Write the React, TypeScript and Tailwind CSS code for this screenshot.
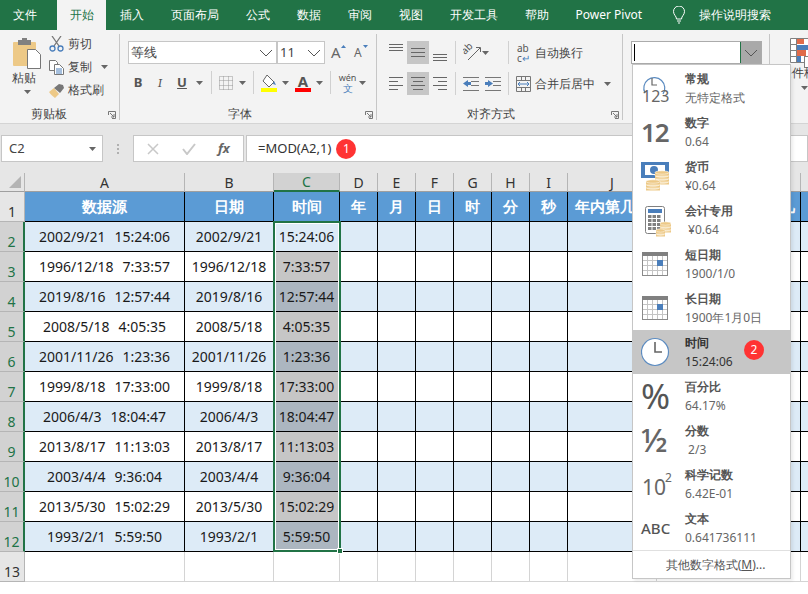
import React from 'react';

const rows = [
  ['2002/9/21', '15:24:06'],
  ['1996/12/18', '7:33:57'],
  ['2019/8/16', '12:57:44'],
  ['2008/5/18', '4:05:35'],
  ['2001/11/26', '1:23:36'],
  ['1999/8/18', '17:33:00'],
  ['2006/4/3', '18:04:47'],
  ['2013/8/17', '11:13:03'],
  ['2003/4/4', '9:36:04'],
  ['2013/5/30', '15:02:29'],
  ['1993/2/1', '5:59:50'],
];

const tabs = ['插入', '页面布局', '公式', '数据', '审阅', '视图', '开发工具', '帮助', 'Power Pivot'];
const letters = ['D', 'E', 'F', 'G', 'H', 'I', 'J', 'K', 'L'];

const Caret = ({ className = '' }: { className?: string }) => (
  <svg width="7" height="4" viewBox="0 0 7 4" className={className}>
    <path d="M0 0h7L3.5 4z" fill="#666" />
  </svg>
);

const Chevron = () => (
  <svg width="14" height="8" viewBox="0 0 14 8">
    <path d="M1 1l6 6 6-6" fill="none" stroke="#555" strokeWidth="1" />
  </svg>
);

const Launcher = () => (
  <svg width="8" height="8" viewBox="0 0 8 8" className="absolute right-[3px] bottom-[1px]">
    <path d="M.5 4V.5H7.5V7.5H4M2 2l4 4M6 3v3H3" fill="none" stroke="#777" strokeWidth="1" />
  </svg>
);

const Sep = ({ className = '' }: { className?: string }) => <div className={'w-px h-[23px] bg-[#d0d0d0] ' + className} />;

// x1, x2, y for each stroke of an alignment glyph
const Lines = ({ d, w = 14, h = 23, color = '#666' }: { d: number[][]; w?: number; h?: number; color?: string }) => (
  <svg width={w} height={h} viewBox={'0 0 ' + w + ' ' + h}>
    {d.map((l, i) => (
      <line key={i} x1={l[0]} x2={l[1]} y1={l[2] + 0.5} y2={l[2] + 0.5} stroke={color} strokeWidth="1" />
    ))}
  </svg>
);

const AlignBtn = ({ d, on }: { d: number[][]; on?: boolean }) => (
  <div className={'w-[22px] h-[23px] flex items-center justify-center ' + (on ? 'bg-[#c6c6c6]' : '')}>
    <Lines d={d} />
  </div>
);

const Coins = ({ x, y, w = 14, n = 3 }: { x: number; y: number; w?: number; n?: number }) => (
  <g>
    {Array.from({ length: n }).map((_, i) => (
      <g key={i}>
        <rect x={x} y={y + (n - 1 - i) * 3 + 1.5} width={w} height="3" fill="#edc987" />
        <ellipse cx={x + w / 2} cy={y + (n - 1 - i) * 3 + 1.5} rx={w / 2} ry="1.7" fill={i === n - 1 ? '#edc987' : '#f6e3bd'} stroke="#fff" strokeWidth=".5" />
      </g>
    ))}
  </g>
);

const CalendarIcon = () => (
  <svg width="30" height="44" viewBox="0 0 30 44">
    <rect x="1.5" y="10.5" width="25" height="23" fill="#fff" stroke="#8a8a8a" />
    <rect x="1" y="10" width="26" height="4" fill="#808080" />
    {[6.5, 11.5, 16.5, 21.5].map((x) => (
      <line key={x} x1={x} x2={x} y1="14" y2="33" stroke="#c4c4c4" />
    ))}
    {[18.5, 23.5, 28.5].map((y) => (
      <line key={y} x1="2" x2="26" y1={y} y2={y} stroke="#c4c4c4" />
    ))}
    <rect x="16" y="18" width="6" height="6" fill="#4a7ebb" />
  </svg>
);

const menu: { title: string; sub: string; icon: React.ReactNode; on?: boolean }[] = [
  {
    title: '常规',
    sub: '无特定格式',
    icon: (
      <div className="relative w-[30px] h-[44px]">
        <svg width="30" height="44" viewBox="0 0 30 44">
          <path d="M4 27a10.5 10.5 0 1 1 18 1" fill="none" stroke="#5b8bc0" strokeWidth="1.2" />
          <path d="M11 12v7h5" fill="none" stroke="#666" strokeWidth="1.2" />
        </svg>
        <span className="absolute left-[1px] top-[20px] text-[16px] leading-[20px] text-[#666]">123</span>
      </div>
    ),
  },
  {
    title: '数字',
    sub: '0.64',
    icon: <span className="block w-[30px] text-[26px] leading-[44px] tracking-[-1px] font-semibold text-[#666] font-['Noto_Sans',sans-serif]">12</span>,
  },
  {
    title: '货币',
    sub: '¥0.64',
    icon: (
      <svg width="30" height="44" viewBox="0 0 30 44">
        <rect x="0" y="8" width="28" height="16" fill="#4a7ebb" />
        <path d="M4 11h20v10H4z" fill="#fff" />
        <circle cx="13" cy="16" r="4" fill="#4a7ebb" />
        <Coins x={14} y={17} n={4} />
        <Coins x={5} y={26} n={3} />
      </svg>
    ),
  },
  {
    title: '会计专用',
    sub: ' ¥0.64',
    icon: (
      <svg width="30" height="44" viewBox="0 0 30 44">
        <rect x="4.5" y="8.5" width="19" height="27" rx="2" fill="#fff" stroke="#808080" />
        <rect x="7" y="11" width="14" height="4" fill="#4a7ebb" />
        {[17, 21, 25, 29].map((y) =>
          [7, 11.5, 16].map((x) => <rect key={x + '-' + y} x={x} y={y} width="3.5" height="3" fill="#808080" />),
        )}
        <Coins x={19} y={24} w={11} n={3} />
        <Coins x={15} y={31} w={9} n={2} />
      </svg>
    ),
  },
  { title: '短日期', sub: '1900/1/0', icon: <CalendarIcon /> },
  { title: '长日期', sub: '1900年1月0日', icon: <CalendarIcon /> },
  {
    title: '时间',
    sub: '15:24:06',
    on: true,
    icon: (
      <svg width="30" height="44" viewBox="0 0 30 44">
        <circle cx="14" cy="22" r="13.5" fill="#fff" stroke="#5b8bc0" strokeWidth="1.2" />
        <path d="M14 12v10h7" fill="none" stroke="#666" strokeWidth="1.6" />
      </svg>
    ),
  },
  {
    title: '百分比',
    sub: '64.17%',
    icon: <span className="block w-[30px] text-[35px] leading-[44px] text-[#555] font-['Liberation_Sans',sans-serif]">%</span>,
  },
  {
    title: '分数',
    sub: ' 2/3',
    icon: <span className="block w-[30px] text-[33px] leading-[44px] font-medium text-[#666] font-['Noto_Sans',sans-serif]">½</span>,
  },
  {
    title: '科学记数',
    sub: '6.42E-01',
    icon: (
      <div className="relative w-[30px] h-[44px] text-[#666] font-['Liberation_Sans',sans-serif]">
        <span className="absolute left-[1px] top-[13px] text-[21px] leading-[24px]">10</span>
        <span className="absolute left-[24px] top-[9px] text-[12px] leading-[14px]">2</span>
      </div>
    ),
  },
  {
    title: '文本',
    sub: '0.641736111',
    icon: <span className="block w-[30px] text-[15px] leading-[44px] font-medium whitespace-nowrap text-[#555] font-['Noto_Sans',sans-serif]">ABC</span>,
  },
];

const Badge = ({ n, className = '' }: { n: number; className?: string }) => (
  <span className={'inline-flex items-center justify-center w-[20px] h-[20px] rounded-full bg-[#ff3333] text-white text-[12px] leading-none ' + className}>{n}</span>
);

const Ribbon = () => (
  <div className="flex h-[94px] bg-[#f3f3f3] border-b border-[#d4d4d4] text-[12px] text-[#444] overflow-hidden">
    {/* clipboard */}
    <div className="relative w-[120px] mt-[4px] h-[86px] flex flex-col border-r border-[#c6c6c6] shrink-0">
      <div className="flex flex-1">
        <div className="w-[49px] pl-[12px] pt-[4px] flex flex-col">
          <svg width="30" height="32" viewBox="0 0 30 32">
            <rect x="1" y="4" width="23" height="24" rx="1" fill="#edc987" />
            <rect x="6" y="2" width="13" height="5" fill="#808080" />
            <rect x="10" y="0" width="5" height="3" fill="#808080" />
            <path d="M15.5 11.5h8l5 5v14h-13z" fill="#fff" stroke="#777" />
          </svg>
          <span className="leading-[16px]">粘贴</span>
          <Caret className="ml-[12px] mt-[4px]" />
        </div>
        <div className="flex flex-col pt-[3px] gap-[9px]">
          <div className="flex items-center h-[14px]">
            <svg width="15" height="16" viewBox="0 0 15 16" className="mr-[4px]">
              <path d="M3 0l7 10M12 0L5 10" stroke="#777" strokeWidth="1.3" />
              <circle cx="3.500" cy="12.500" r="2.500" fill="none" stroke="#4a7ebb" strokeWidth="1.3" />
              <circle cx="11.500" cy="12.500" r="2.500" fill="none" stroke="#4a7ebb" strokeWidth="1.3" />
            </svg>
            剪切
          </div>
          <div className="flex items-center h-[14px]">
            <svg width="15" height="15" viewBox="0 0 15 15" className="mr-[4px]">
              <path d="M.5.5h6l2 2v8H.5z" fill="#fff" stroke="#777" />
              <path d="M5.500 4.500h5l4 4v6h-9z" fill="#fff" stroke="#777" />
              <path d="M7 9h6M7 11h6M7 13h6" stroke="#4a7ebb" />
            </svg>
            复制
            <Caret className="ml-[9px]" />
          </div>
          <div className="flex items-center h-[14px]">
            <svg width="15" height="15" viewBox="0 0 15 15" className="mr-[4px]">
              <path d="M0 9l5-4 5 6-4 4c-2-2-4-3-6-6z" fill="#edc987" />
              <path d="M5 5l5-4 4 1 1 3-4 5z" fill="#777" />
            </svg>
            格式刷
          </div>
        </div>
      </div>
      <div className="h-[12px] pr-[22px] text-center leading-[12px]">剪贴板</div>
      <Launcher />
    </div>

    {/* font */}
    <div className="relative w-[257px] mt-[4px] h-[86px] flex flex-col border-r border-[#c6c6c6] shrink-0 pl-[8px]">
      <div className="flex items-center mt-[7px] h-[23px]">
        <div className="w-[149px] h-[23px] bg-white border border-[#c6c6c6] flex items-center justify-between pl-[2px] pr-[3px] text-[13px]">
          等线
          <Chevron />
        </div>
        <div className="w-[48px] h-[23px] bg-white border border-[#c6c6c6] flex items-center justify-between pl-[2px] pr-[3px] text-[13px]">
          11
          <Chevron />
        </div>
        <div className="relative ml-[6px] w-[20px] text-[15px] leading-none text-[#666] font-['Liberation_Sans',sans-serif]">
          A
          <svg width="5" height="3" viewBox="0 0 5 3" className="absolute left-[10px] top-[0px]"><path d="M0 3h5L2.500 0z" fill="#4a7ebb" /></svg>
        </div>
        <div className="relative ml-[3px] w-[18px] text-[12px] leading-none text-[#666] font-['Liberation_Sans',sans-serif]">
          A
          <svg width="5" height="3" viewBox="0 0 5 3" className="absolute left-[9px] -top-[2px]"><path d="M0 0h5L2.500 3z" fill="#4a7ebb" /></svg>
        </div>
      </div>
      <div className="flex items-center h-[23px] mt-[7px] text-[#555] font-['Liberation_Sans',sans-serif] text-[13px]">
        <span className="w-[20px] text-center font-bold">B</span>
        <span className="w-[24px] text-center italic font-serif">I</span>
        <span className="w-[20px] text-center underline font-bold">U</span>
        <Caret className="ml-[4px]" />
        <Sep className="ml-[8px]" />
        <svg width="14" height="14" viewBox="0 0 14 14" className="ml-[7px]">
          <path d="M.5.5h13v13H.5zM4.500.5v13M9.500.5v13M.5 4.500h13M.5 9.500h13" fill="none" stroke="#999" strokeDasharray="1 1" />
        </svg>
        <Caret className="ml-[6px]" />
        <Sep className="ml-[7px]" />
        <svg width="16" height="18" viewBox="0 0 16 18" className="ml-[7px]">
          <path d="M6 1l7 7-5 5-6-6z" fill="#fff" stroke="#666" />
          <path d="M13 7l2 4-3-1z" fill="#4a7ebb" />
          <rect x="0" y="14" width="16" height="4" fill="#ffff00" />
        </svg>
        <Caret className="ml-[5px]" />
        <div className="ml-[6px] w-[16px] h-[18px] flex flex-col items-center">
          <span className="text-[15px] leading-[14px] font-bold">A</span>
          <span className="w-[16px] h-[4px] bg-[#ff0000]" />
        </div>
        <Caret className="ml-[5px]" />
        <Sep className="ml-[7px]" />
        <div className="ml-[8px] w-[17px] flex flex-col items-center">
          <span className="text-[9px] leading-[10px] whitespace-nowrap font-['Noto_Sans',sans-serif]">wén</span>
          <span className="text-[10px] leading-[10px] text-[#4a7ebb] font-['Noto_Sans_CJK_SC',sans-serif]">文</span>
        </div>
        <Caret className="ml-[3px]" />
      </div>
      <div className="mt-auto h-[12px] -ml-[8px] pr-[16px] text-center leading-[12px]">字体</div>
      <Launcher />
    </div>

    {/* alignment */}
    <div className="relative w-[246px] mt-[4px] h-[86px] flex flex-col border-r border-[#c6c6c6] shrink-0 pl-[8px]">
      <div className="flex items-center mt-[7px] h-[23px]">
        <AlignBtn d={[[0, 14, 3], [0, 14, 6], [0, 14, 9]]} />
        <AlignBtn on d={[[0, 14, 7], [0, 14, 11], [0, 14, 15]]} />
        <AlignBtn d={[[0, 14, 13], [0, 14, 16], [0, 14, 19]]} />
        <Sep className="ml-[4px]" />
        <svg width="18" height="17" viewBox="0 0 18 17" className="ml-[7px]">
          <text x="2" y="11" fontSize="10" fill="#555" transform="rotate(-45 2 11)">ab</text>
          <path d="M5 16L17 4M13 3.500h4.500V8" fill="none" stroke="#666" />
        </svg>
        <Caret className="ml-[1px]" />
        <Sep className="ml-[19px]" />
        <div className="ml-[8px] w-[18px] flex flex-col text-[10px] leading-[10px] text-[#555]">
          <span>ab</span>
          <span>c<span className="text-[#4a7ebb]">↵</span></span>
        </div>
        <span>自动换行</span>
      </div>
      <div className="flex items-center mt-[8px] h-[23px]">
        <AlignBtn d={[[0, 14, 5], [0, 9, 9], [0, 14, 13], [0, 9, 17]]} />
        <AlignBtn on d={[[0, 14, 5], [2, 12, 9], [0, 14, 13], [2, 12, 17]]} />
        <AlignBtn d={[[0, 14, 5], [5, 14, 9], [0, 14, 13], [5, 14, 17]]} />
        <Sep className="ml-[4px]" />
        <svg width="16" height="14" viewBox="0 0 16 14" className="ml-[7px]">
          <path d="M0 .5h16M8 4.500h8M8 8.500h8M0 13.500h16" stroke="#777" />
          <path d="M0 6.500L5 3v2h3v3H5v2z" fill="#4a7ebb" />
        </svg>
        <svg width="16" height="14" viewBox="0 0 16 14" className="ml-[6px]">
          <path d="M0 .5h16M8 4.500h8M8 8.500h8M0 13.500h16" stroke="#777" />
          <path d="M8 6.500L3 3v2H0v3h3v2z" fill="#4a7ebb" />
        </svg>
        <Sep className="ml-[7px]" />
        <svg width="15" height="16" viewBox="0 0 15 16" className="ml-[7px]">
          <path d="M.5.5h14v15H.5zM.5 4.500h14M.5 11.500h14M5.500.5v4M9.500.5v4M5.500 11.500v4M9.500 11.500v4" fill="none" stroke="#777" />
          <path d="M2 8h11M4 6L2 8l2 2M11 6l2 2-2 2" fill="none" stroke="#4a7ebb" />
        </svg>
        <span className="ml-[4px]">合并后居中</span>
        <Caret className="ml-[9px]" />
      </div>
      <div className="mt-auto h-[12px] -ml-[8px] pr-[17px] text-center leading-[12px]">对齐方式</div>
      <Launcher />
    </div>

    {/* number */}
    <div className="w-[147px] mt-[4px] h-[86px] border-r border-[#c6c6c6] shrink-0 pl-[8px] pt-[7px]">
      <div className="flex w-[131px] h-[23px] border border-[#ababab] bg-white">
        <div className="flex-1 pl-[2px] py-[2px]">
          <div className="w-px h-[17px] bg-black" />
        </div>
        <div className="w-[21px] bg-[#a9a9a9] border-l border-[#217346] flex items-center justify-center">
          <Chevron />
        </div>
      </div>
    </div>

    {/* conditional format, runs off the window */}
    <div className="flex-1 mt-[4px] pl-[10px]">
      <svg width="19" height="30" viewBox="0 0 19 30" className="ml-[10px] mt-[4px]">
        <path d="M.5.5h18v24H.5z" fill="#fff" stroke="#808080" />
        <path d="M7 1h7v5H7zM7 12h9v6H7z" fill="#e06b4a" />
        <path d="M7 7h11v5H7zM7 18h4v6H7z" fill="#4a7ebb" />
        <path d="M.5 6.500h6M.5 12.500h6M.5 18.500h6M6.500.5v24" stroke="#808080" />
        <rect x="14.500" y="18.500" width="5" height="11" fill="#fff" stroke="#808080" />
      </svg>
      <div className="whitespace-nowrap leading-[14px] -mt-[2px]">条件格式</div>
      <Caret className="ml-[21px] mt-[6px]" />
    </div>
  </div>
);

const FormulaBar = () => (
  <div className="flex items-stretch h-[38px] pb-[11px] bg-[#e6e6e6] text-[#444]">
    <div className="w-[102px] ml-px bg-white border border-[#c6c6c6] flex items-center justify-between pl-[7px] pr-[6px] text-[13px]">
      C2
      <Caret />
    </div>
    <div className="w-[30px] flex flex-col items-center justify-center gap-[2px]">
      <i className="w-[2px] h-[2px] bg-[#b0b0b0]" />
      <i className="w-[2px] h-[2px] bg-[#b0b0b0]" />
      <i className="w-[2px] h-[2px] bg-[#b0b0b0]" />
    </div>
    <div className="w-[111px] bg-white border border-[#c6c6c6] flex items-center pl-[13px]">
      <svg width="12" height="12" viewBox="0 0 12 12"><path d="M1 1l10 10M11 1L1 11" stroke="#c8c8c8" strokeWidth="1.5" /></svg>
      <svg width="14" height="12" viewBox="0 0 14 12" className="ml-[23px]"><path d="M1 6l4 5 8-10" fill="none" stroke="#c8c8c8" strokeWidth="2" /></svg>
      <span className="ml-[22px] text-[13px] italic font-bold text-[#666] font-['Liberation_Serif',serif]">fx</span>
    </div>
    <div className="flex-1 ml-[2px] bg-white border border-[#c6c6c6] flex items-center pl-[11px] text-[13px] text-[#333]">
      =MOD(A2,1)
      <Badge n={1} className="ml-[5px]" />
    </div>
  </div>
);

const Sheet = () => {
  const hdr = 'bg-[#e6e6e6] border-r border-b border-r-[#b5b5b5] border-b-[#9f9f9f] flex items-end justify-center text-[14px] leading-[17px] text-[#333]';
  const rowHead = 'flex items-end justify-center pb-[1px] border-b border-[#b5b5b5] text-[14px] leading-[17px] ';
  const cell = 'border-r border-b border-black flex items-center justify-center text-[14px] text-[#1a1a1a]';
  return (
    <div className="relative bg-white overflow-hidden h-[421px]">
      <div className="grid grid-cols-[25px_160px_89px_66px_repeat(6,38px)_89px_144px_100px] grid-rows-[19px_repeat(13,30px)] w-[1000px]">
        {/* column letters */}
        <div className="relative bg-[#e6e6e6] border-r border-b border-r-[#b5b5b5] border-b-[#9f9f9f]">
          <svg width="12" height="12" viewBox="0 0 12 12" className="absolute left-[9px] top-[3px]"><path d="M12 0v12H0z" fill="#b4b4b4" /></svg>
        </div>
        <div className={hdr}>A</div>
        <div className={hdr}>B</div>
        <div className="bg-[#d2d2d2] border-r border-r-[#b5b5b5] border-b-2 border-b-[#217346] flex items-end justify-center text-[14px] leading-[16px] text-[#217346]">C</div>
        {letters.map((l) => (
          <div key={l} className={hdr}>{l}</div>
        ))}

        {/* title row */}
        <div className={rowHead + 'bg-[#e6e6e6] border-r border-r-[#b5b5b5] text-[#333]'}>1</div>
        {['数据源', '日期', '时间', '年', '月', '日', '时', '分', '秒', '年内第几天'].map((t) => (
          <div key={t} className="bg-[#5b9bd5] border-r border-b border-black flex items-center justify-center text-[15px] font-bold text-white whitespace-nowrap overflow-hidden">
            {t}
          </div>
        ))}
        <div className="bg-[#5b9bd5] border-r border-b border-black flex items-center justify-end pr-[5px] text-[15px] font-bold text-white whitespace-nowrap overflow-hidden">
          年内第几
        </div>
        <div className="bg-[#5b9bd5] border-b border-black" />

        {rows.map((r, i) => {
          const even = i % 2 === 0;
          const bg = even ? 'bg-[#ddebf7]' : 'bg-white';
          const picked = i === 0 ? 'bg-[#ddebf7]' : even ? 'bg-[#acb6c0]' : 'bg-[#c6c6c6]';
          return (
            <React.Fragment key={i}>
              <div className={rowHead + 'bg-[#d2d2d2] border-r-2 border-r-[#217346] text-[#217346]'}>{i + 2}</div>
              <div className={cell + ' gap-[9px] ' + bg}>
                <span>{r[0]}</span>
                <span>{r[1]}</span>
              </div>
              <div className={cell + ' ' + bg}>{r[0]}</div>
              <div className={cell + ' ' + picked}>{r[1]}</div>
              {letters.map((l) => (
                <div key={l} className={(l === 'L' ? 'border-b border-black ' : 'border-r border-b border-black ') + bg} />
              ))}
            </React.Fragment>
          );
        })}

        <div className={rowHead + 'bg-[#e6e6e6] border-r border-r-[#b5b5b5] text-[#333]'}>13</div>
        {Array.from({ length: 12 }).map((_, i) => (
          <div key={i} className="border-r border-b border-[#d4d4d4]" />
        ))}
        <div className="bg-[#e6e6e6] border-r border-[#b5b5b5]" />
        {Array.from({ length: 12 }).map((_, i) => (
          <div key={i} className="border-r border-[#d4d4d4]" />
        ))}
      </div>

      {/* selected range C2:C12 */}
      <div className="absolute left-[273px] top-[48px] w-[68px] h-[331px] border-2 border-[#217346] shadow-[inset_0_0_0_1px_#fff] pointer-events-none" />
      <div className="absolute left-[337px] top-[375px] w-[6px] h-[6px] bg-[#217346] border border-white" />
    </div>
  );
};

const FormatMenu = () => (
  <div className="absolute left-[632px] top-[64px] w-[159px] h-[515px] bg-white border border-[#c6c6c6] shadow-[2px_2px_3px_rgba(0,0,0,0.08)] text-[12px]">
    <div className="pt-px">
      {menu.map((m) => (
        <div key={m.title} className={'relative flex h-[44px] pl-[8px] ' + (m.on ? 'bg-[#c6c6c6]' : '')}>
          <div className="w-[30px] h-[44px] shrink-0">{m.icon}</div>
          <div className="ml-[14px] pt-[4px] whitespace-pre">
            <div className={'leading-[18px] font-bold ' + (m.on ? 'text-[#333]' : 'text-[#555]')}>{m.title}</div>
            <div className={'leading-[20px] ' + (m.on ? 'text-[#333]' : 'text-[#666]')}>{m.sub}</div>
          </div>
          {m.on && <Badge n={2} className="absolute left-[111px] top-[10px]" />}
        </div>
      ))}
    </div>
    <div className="border-t border-[#e0e0e0] h-[28px] pl-[8px] flex items-center justify-center text-[#555]">
      其他数字格式(<span className="underline">M</span>)...
    </div>
  </div>
);

export default function App() {
  return (
    <div className="relative w-[808px] h-[594px] overflow-hidden bg-[#e6e6e6] font-['Roboto','Noto_Sans_CJK_SC',sans-serif]">
      <div className="flex h-[30px] bg-[#217346] text-white text-[12px] items-stretch">
        <div className="w-[57px] pl-[13px] flex items-center">文件</div>
        <div className="w-[49px] bg-[#f3f3f3] text-[#217346] flex items-center justify-center">开始</div>
        {tabs.map((t) => (
          <div key={t} className="px-[13.5px] flex items-center whitespace-nowrap font-['Noto_Sans','Noto_Sans_CJK_SC',sans-serif]">{t}</div>
        ))}
        <svg width="14" height="18" viewBox="0 0 14 18" fill="none" stroke="#fff" className="ml-[16px] self-center">
          <path d="M4.500 13c0-3-3-4-3-7.500a5.500 5.500 0 0 1 11 0C12.500 9 9.500 10 9.500 13zM5 15h4M6 17h2" />
        </svg>
        <div className="ml-[13px] flex items-center whitespace-nowrap">操作说明搜索</div>
      </div>
      <Ribbon />
      <div className="h-[11px] bg-[#e6e6e6]" />
      <FormulaBar />
      <Sheet />
      <FormatMenu />
    </div>
  );
}
